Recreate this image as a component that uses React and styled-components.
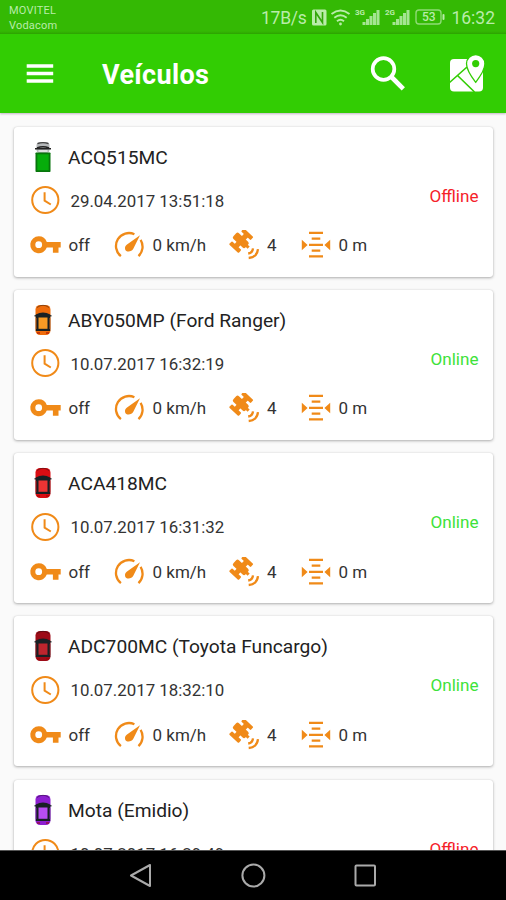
import React from "react";
import styled, { createGlobalStyle } from "styled-components";

const ORANGE = "#f08a18";

const GlobalStyle = createGlobalStyle`
  * { box-sizing: border-box; }
  body { margin: 0; background: #fafafa; overflow: hidden; }
  svg { display: block; flex: none; }
`;

const Screen = styled.div`
  width: 506px;
  height: 900px;
  display: flex;
  flex-direction: column;
  overflow: hidden;
  font-family: Roboto, sans-serif;
  background: #fafafa;
`;

const StatusBar = styled.header`
  flex: none;
  height: 34px;
  display: flex;
  align-items: center;
  padding: 1px 11px 0 9px;
  color: #b9ecaa;
  background: linear-gradient(#34b904 0 31px, #2da600 34px);
`;

const Carriers = styled.div`
  flex: 1;
  font-size: 11px;
  line-height: 15.5px;
  padding-top: 1px;
  letter-spacing: 0.2px;
`;

const StatusText = styled.span`
  font-size: 17.5px;
  line-height: 34px;
  letter-spacing: ${(p) => p.$spacing || "0"};
  margin-top: 1px;
`;

const StatusIcons = styled.div`
  margin: 0 6px 0 5px;
`;

const AppBar = styled.nav`
  flex: none;
  height: 79px;
  display: flex;
  align-items: center;
  padding: 0 21px 0 26px;
  color: #fff;
  background: #32cd03;
  box-shadow: 0 1px 2px rgba(90, 50, 100, 0.35);
`;

const Title = styled.h1`
  flex: 1;
  margin: 3px 0 0 48px;
  font-size: 27px;
  line-height: 34px;
  font-weight: 700;
  letter-spacing: 0.35px;
`;

const BarAction = styled.button`
  display: flex;
  padding: 0;
  margin-left: ${(p) => p.$gap || 0}px;
  border: 0;
  color: inherit;
  background: none;
`;

const List = styled.main`
  flex: 1;
  min-height: 0;
  overflow: hidden;
  display: flex;
  flex-direction: column;
  gap: 13.3px;
  padding: 13.6px 13px 0 14px;
`;

const Card = styled.article`
  flex: none;
  height: 150px;
  display: grid;
  grid-template-columns: 1fr auto;
  grid-template-rows: 44px 43px 47px;
  padding: 8px 14.5px 0 15px;
  border-radius: 3px;
  background: #fff;
  box-shadow: 0 1px 3px rgba(0, 0, 0, 0.3), 0 0 1px rgba(0, 0, 0, 0.16);
`;

const Row = styled.div`
  grid-column: 1;
  display: flex;
  align-items: center;
`;

const MarkerSlot = styled.div`
  width: 22px;
  margin: 0 14.5px 0 2.5px;
`;

const Name = styled.h2`
  margin: 2px 0 0;
  font-size: 19.2px;
  font-weight: 400;
  line-height: 24px;
  white-space: nowrap;
  color: #222;
`;

const Time = styled.time`
  margin: 1px 0 0 10.5px;
  font-size: 16.85px;
  line-height: 22px;
  white-space: nowrap;
  color: #333;
`;

const Status = styled.span`
  grid-column: 2;
  grid-row: 2;
  align-self: center;
  margin-top: -9px;
  font-size: 17.1px;
  line-height: 22px;
  color: ${(p) => (p.$online ? "#3ee23a" : "#f5222a")};
`;

const Metrics = styled.div`
  grid-column: 1 / 3;
  display: grid;
  grid-template-columns: 85px 114.5px 72px auto;
  align-items: center;
`;

const Metric = styled.div`
  display: flex;
  align-items: center;
  gap: ${(p) => p.$gap}px;
  font-size: 17px;
  line-height: 22px;
  color: #333;
  white-space: nowrap;
`;

const NavBar = styled.footer`
  flex: none;
  height: 50px;
  display: flex;
  align-items: center;
  justify-content: center;
  gap: 87px;
  background: #000;
  border-top: 1px solid #555;
`;

const Car = ({ color, inner }) => (
  <svg width="22" height="32" viewBox="0 0 22 32">
    <rect x="3.5" y="1" width="15" height="30" rx="4.5" fill={color} />
    <path d="M5 3.5Q11-1 17 3.5" stroke="#111" strokeOpacity=".45" fill="none" />
    <path d="M2.5 11.8h17" stroke="#20282a" strokeWidth="1.3" />
    <path d="M3.8 10.5Q11 6.5 18.2 10.5V27H3.8Z" fill="#182024" />
    <path d="M6.5 13.5h9v11.3h-9z" fill={inner} />
    <path d="M4.2 14v11M17.8 14v11" stroke={color} strokeWidth=".6" />
    <path d="M5 29h3M14 29h3" stroke="#a00000" strokeOpacity=".5" strokeWidth="2" />
  </svg>
);

const Truck = () => (
  <svg width="22" height="32" viewBox="0 0 22 32">
    <rect x="4.5" y="1" width="13" height="11" rx="3.5" fill="#b5b8ba" />
    <path d="M5.5 2.7Q11 .5 16.5 2.7" stroke="#444" strokeWidth="1.3" fill="none" />
    <path d="M3 7.7h16M5 7Q11 4.5 17 7" stroke="#222" strokeWidth="1.6" fill="none" />
    <path d="M6.5 10h9" stroke="#eee" strokeWidth="1.5" />
    <rect x="3.5" y="11.5" width="15" height="19.5" rx=".7" fill="#08750c" />
    <rect x="5.3" y="13.3" width="11.4" height="16" fill="#06ad0b" />
  </svg>
);

const ClockIcon = () => (
  <svg width="31" height="30" viewBox="0 0 31 30" fill="none" stroke={ORANGE} strokeWidth="2">
    <circle cx="16.3" cy="15" r="13.1" />
    <path d="M15.6 7.3v8.4l6.2 3.8" />
  </svg>
);

const KeyIcon = () => (
  <svg width="32" height="20" viewBox="0 0 32 20">
    <path
      fill={ORANGE}
      fillRule="evenodd"
      d="M9.7 1.2a8.5 8.5 0 0 1 8.1 5.8H31.7v5.5h-2.2v5.2h-5.6v-5.2h-6.1A8.5 8.5 0 1 1 9.7 1.2Zm0 5.1a3.4 3.4 0 1 0 0 6.8 3.4 3.4 0 0 0 0-6.8Z"
    />
  </svg>
);

const GaugeIcon = () => (
  <svg width="30" height="28" viewBox="-.7 0 30 28">
    <g fill="none" stroke={ORANGE} strokeWidth="2.3">
      <path d="M6.2 25.2A13 13 0 0 1 19.7 3.2" />
      <path d="M25.9 8.9A13 13 0 0 1 23.8 25.2" />
    </g>
    <path fill={ORANGE} d="M25.3 4.3 18.6 17.8C16.8 21.4 11 21.4 10.4 18.2c-.4-1.9.3-3.4 1.9-4.7Z" />
  </svg>
);

const SatelliteIcon = () => (
  <svg width="31" height="30" viewBox="0 0 31 30" fill={ORANGE}>
    <g transform="translate(12.2 10.7) rotate(43)">
      <rect x="-8.8" y="-4" width="16.5" height="8" rx="2" />
      <rect x="-2.6" y="-9" width="5.2" height="18" />
      <rect x="-6.5" y="-11" width="13" height="4.3" rx="1" />
      <rect x="-6.5" y="6.7" width="13" height="4.3" rx="1" />
      <rect x="7" y="-1.5" width="3.2" height="3" />
    </g>
    <g fill="none" stroke={ORANGE} strokeWidth="2.3">
      <path d="M24 18.3Q23.6 22.6 19.2 23.5" />
      <path d="M29 19.2Q28.2 27.2 19.7 28" />
    </g>
  </svg>
);

const AltitudeIcon = () => (
  <svg width="30" height="28" viewBox="0 0 30 28">
    <path
      d="M8 1.9h14M10.7 7.7h8.6M8 13.9h14M10.7 19.7h8.6M8 25.4h14"
      stroke={ORANGE}
      strokeWidth="2.3"
    />
    <path d="M.8 8.8 6.6 14 .8 19.2ZM29.2 8.8 23.4 14l5.8 5.2Z" fill={ORANGE} />
  </svg>
);

const MenuIcon = () => (
  <svg width="28" height="22" viewBox="0 0 28 22">
    <path d="M.7 3h26.5M.7 10.5h26.5M.7 18h26.5" stroke="#fff" strokeWidth="3.7" />
  </svg>
);

const SearchIcon = () => (
  <svg width="36" height="36" viewBox="0 0 36 36" fill="none" stroke="#fff">
    <circle cx="13.5" cy="13" r="10.8" strokeWidth="3.7" />
    <path d="m21 20.5 12.3 12.3" strokeWidth="4.6" />
  </svg>
);

const MapIcon = () => (
  <svg width="36" height="38" viewBox="0 0 36 38">
    <rect x="1" y="4" width="33" height="32.5" rx="4" fill="#fff" />
    <g fill="none" stroke="#32cd03" strokeWidth="1.6">
      <path d="M0 28 18 12M8.5 20.5 25.5 37M18 12 20 14" />
    </g>
    <path
      d="M26.7 -.5A9.2 9.2 0 0 0 17.5 8.7c0 6.7 9.2 18.6 9.2 18.6s9.2-11.9 9.2-18.6A9.2 9.2 0 0 0 26.7-.5Z"
      fill="#fff"
      stroke="#32cd03"
      strokeWidth="1.3"
    />
    <circle cx="26.7" cy="8.6" r="3.6" fill="#32cd03" />
  </svg>
);

const MiniNetwork = styled.text`
  font: 700 8px Roboto, sans-serif;
`;

const BatteryLevel = styled.text`
  font: 500 12px Roboto, sans-serif;
`;

const signalBars = [0, 1, 2, 3, 4];

const SystemIcons = () => (
  <svg width="134" height="22" viewBox="0 0 134 22" fill="#b9ecaa">
    <rect x="1" y="2.5" width="14.5" height="16" rx="1.5" />
    <path d="M4.8 16V5.5l6.7 10V5" fill="none" stroke="#33a70b" strokeWidth="1.6" />
    <g fill="none" stroke="#b9ecaa" strokeWidth="1.9">
      <path d="M20.5 7q9-7 18 0M23.3 10.7q6.2-5 12.4 0M26 14.2q3.5-3 7 0" />
    </g>
    <circle cx="29.5" cy="17" r="1.4" />
    {[44, 74].map((x, i) => (
      <g key={x}>
        <MiniNetwork x={x} y="8">{i === 0 ? "3G" : "2G"}</MiniNetwork>
        {signalBars.map((n) => (
          <rect key={n} x={x + 7.5 + n * 3.5} y={15 - n * 3} width="3" height={3 + n * 3} opacity=".85" />
        ))}
      </g>
    ))}
    <rect x="105" y="3" width="25" height="14" rx="3" fill="none" stroke="#8edb75" strokeWidth="1.4" />
    <rect x="131.5" y="7" width="2" height="6" rx="1" />
    <BatteryLevel x="111" y="14.3">53</BatteryLevel>
  </svg>
);

const vehicles = [
  { name: "ACQ515MC", time: "29.04.2017 13:51:18", online: false },
  { name: "ABY050MP (Ford Ranger)", time: "10.07.2017 16:32:19", online: true, color: "#ee6c0c", inner: "#f79a25" },
  { name: "ACA418MC", time: "10.07.2017 16:31:32", online: true, color: "#d90d13", inner: "#ed3434" },
  { name: "ADC700MC (Toyota Funcargo)", time: "10.07.2017 18:32:10", online: true, color: "#9d0b17", inner: "#bd252e" },
  { name: "Mota (Emidio)", time: "10.07.2017 16:29:49", online: false, color: "#8d1fd0", inner: "#b84df2" },
];

const VehicleCard = ({ name, time, online, color, inner }) => (
  <Card>
    <Row>
      <MarkerSlot>{color ? <Car color={color} inner={inner} /> : <Truck />}</MarkerSlot>
      <Name>{name}</Name>
    </Row>
    <Row>
      <ClockIcon />
      <Time>{time}</Time>
    </Row>
    <Status $online={online}>{online ? "Online" : "Offline"}</Status>
    <Metrics>
      <Metric $gap={7.5}><KeyIcon />off</Metric>
      <Metric $gap={8.5}><GaugeIcon />0 km/h</Metric>
      <Metric $gap={7.5}><SatelliteIcon />4</Metric>
      <Metric $gap={8}><AltitudeIcon />0 m</Metric>
    </Metrics>
  </Card>
);

export default function App() {
  return (
    <>
      <GlobalStyle />
      <Screen>
        <StatusBar>
          <Carriers>
            <div>MOVITEL</div>
            <div>Vodacom</div>
          </Carriers>
          <StatusText $spacing="-0.3px">17B/s</StatusText>
          <StatusIcons><SystemIcons /></StatusIcons>
          <StatusText>16:32</StatusText>
        </StatusBar>
        <AppBar>
          <BarAction aria-label="Menu"><MenuIcon /></BarAction>
          <Title>Veículos</Title>
          <BarAction aria-label="Pesquisar"><SearchIcon /></BarAction>
          <BarAction aria-label="Mapa" $gap={43}><MapIcon /></BarAction>
        </AppBar>
        <List>
          {vehicles.map((v) => <VehicleCard key={v.name} {...v} />)}
        </List>
        <NavBar>
          <svg width="24" height="24" viewBox="0 0 24 24" fill="none" stroke="#aaa" strokeWidth="2">
            <path d="M21 1v21L2 11.5Z" strokeLinejoin="round" />
          </svg>
          <svg width="26" height="26" viewBox="0 0 26 26" fill="none" stroke="#aaa" strokeWidth="2">
            <circle cx="13.4" cy="12.5" r="11" />
          </svg>
          <svg width="24" height="24" viewBox="0 0 24 24" fill="none" stroke="#aaa" strokeWidth="2">
            <rect x="2.5" y="1.5" width="19.5" height="20" rx="1" />
          </svg>
        </NavBar>
      </Screen>
    </>
  );
}
